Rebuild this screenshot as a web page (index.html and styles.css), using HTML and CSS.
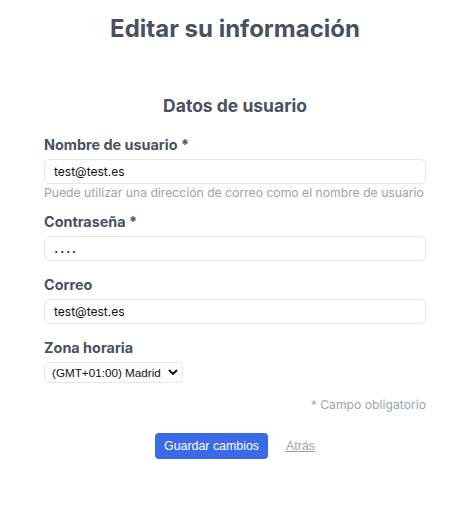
FILE: index.html
```html
<!DOCTYPE html>
<html lang="es">
<head>
<meta charset="utf-8">
<title>Editar su información</title>
<link rel="stylesheet" href="styles.css">
</head>
<body>
<main class="page">
  <h1 class="title">Editar su información</h1>
  <form class="form">
    <h2 class="section-title">Datos de usuario</h2>
    <div class="field">
      <label class="label" for="username">Nombre de usuario *</label>
      <input class="input" id="username" type="text" value="test@test.es">
      <p class="help">Puede utilizar una dirección de correo como el nombre de usuario</p>
    </div>
    <div class="field field-after-help">
      <label class="label" for="password">Contraseña *</label>
      <input class="input input-password" id="password" type="password" value="1234">
    </div>
    <div class="field">
      <label class="label" for="email">Correo</label>
      <input class="input" id="email" type="text" value="test@test.es">
    </div>
    <div class="field">
      <label class="label" for="tz">Zona horaria</label>
      <div class="select-wrap">
        <select class="select" id="tz">
          <option>(GMT+01:00) Madrid</option>
        </select>
        <svg class="chevron" width="10" height="7" viewBox="0 0 10 7"><path d="M1.5 1.5 L5 5 L8.5 1.5" fill="none" stroke="#111" stroke-width="1.9" stroke-linecap="round" stroke-linejoin="round"/></svg>
      </div>
    </div>
    <p class="required-note">* Campo obligatorio</p>
    <div class="actions">
      <button class="btn" type="button">Guardar cambios</button>
      <a class="back" href="#">Atrás</a>
    </div>
  </form>
</main>
</body>
</html>
```
FILE: styles.css
```css
* { box-sizing: border-box; }
html, body { margin: 0; padding: 0; background: #fff; }
body {
  font-family: Inter, "Noto Sans", sans-serif;
  color: #4b5060;
}
.page {
  width: 382px;
  margin-left: 44px;
  padding-top: 13px;
}
.title {
  margin: 0;
  text-align: center;
  font-size: 24px;
  line-height: 32px;
  font-weight: 700;
  color: #4b5060;
}
.form {
  display: flex;
  flex-direction: column;
}
.section-title {
  margin: 48.5px 0 0;
  text-align: center;
  font-size: 17.5px;
  line-height: 24px;
  font-weight: 700;
  color: #4b5060;
}
.field {
  display: flex;
  flex-direction: column;
  margin-top: 14px;
}
.section-title + .field { margin-top: 17px; }
.field-after-help { margin-top: 11px; }
.label {
  font-size: 14.4px;
  line-height: 20px;
  font-weight: 700;
  color: #4b5060;
}
.input {
  margin-top: 4px;
  height: 25px;
  width: 100%;
  border: 1px solid #e5e7eb;
  border-radius: 5px;
  padding: 0 9px;
  font-family: Inter, sans-serif;
  font-size: 12px;
  color: #111;
  background: #fff;
  outline: none;
}
.input-password {
  padding: 6px 9px 0 10px;
  font-family: "Liberation Sans", Arial, sans-serif;
  font-size: 7px;
  letter-spacing: 3.5px;
}
.help {
  margin: 1px 0 0;
  font-size: 12.2px;
  line-height: 16px;
  color: #9ca3af;
  white-space: nowrap;
}
.select-wrap {
  position: relative;
  margin-top: 4px;
  width: 139px;
}
.select {
  appearance: none;
  -webkit-appearance: none;
  display: block;
  width: 139px;
  height: 21px;
  border: 1px solid #e5e7eb;
  border-radius: 4px;
  background: #fff;
  padding: 0 0 0 7px;
  font-family: "Liberation Sans", Arial, sans-serif;
  font-size: 11.7px;
  color: #111;
}
.chevron {
  position: absolute;
  right: 5px;
  top: 7px;
  pointer-events: none;
}
.required-note {
  margin: 14px 0 0;
  text-align: right;
  font-size: 12.2px;
  line-height: 16px;
  color: #9ca3af;
}
.actions {
  display: flex;
  align-items: center;
  justify-content: center;
  gap: 18px;
  margin-top: 20.5px;
}
.btn {
  height: 26px;
  padding: 0 9px;
  border: none;
  border-radius: 4px;
  background: #3a6ae6;
  color: #fff;
  font-family: "Liberation Sans", Arial, sans-serif;
  font-size: 12.4px;
}
.back {
  font-family: "Liberation Sans", Arial, sans-serif;
  font-size: 12.4px;
  color: #9ca3af;
  text-decoration: underline;
}
```
